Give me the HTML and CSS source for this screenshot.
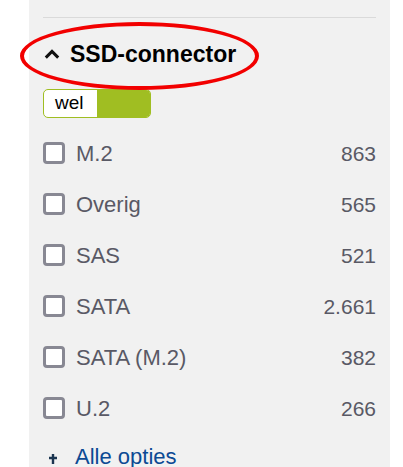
FILE: index.html
```html
<!DOCTYPE html>
<html lang="nl">
<head>
<meta charset="utf-8">
<link rel="stylesheet" href="styles.css">
</head>
<body>
<div class="panel">
  <div class="divider"></div>
  <h2 class="heading">
    <svg class="chevron" width="16" height="10" viewBox="0 0 16 10"><polyline points="1.8,8.6 8,2.4 14.2,8.6" fill="none" stroke="#111" stroke-width="3"/></svg>
    <span>SSD-connector</span>
  </h2>
  <div class="toggle"><span class="toggle-label">wel</span><span class="toggle-knob"></span></div>
  <ul class="options">
    <li class="option"><span class="box"></span><span class="label">M.2</span><span class="count">863</span></li>
    <li class="option"><span class="box"></span><span class="label">Overig</span><span class="count">565</span></li>
    <li class="option"><span class="box"></span><span class="label">SAS</span><span class="count">521</span></li>
    <li class="option"><span class="box"></span><span class="label">SATA</span><span class="count">2.661</span></li>
    <li class="option"><span class="box"></span><span class="label">SATA (M.2)</span><span class="count">382</span></li>
    <li class="option"><span class="box"></span><span class="label">U.2</span><span class="count">266</span></li>
  </ul>
  <a class="more" href="#">
    <svg class="plus" width="10" height="12" viewBox="0 0 10 12"><path d="M5 1v10M1 5h8" stroke="#1b3550" stroke-width="2.4"/></svg>
    <span>Alle opties</span>
  </a>
</div>
<div class="annotation"></div>
</body>
</html>
```

FILE: styles.css
```css
html, body {
  margin: 0;
  padding: 0;
  background: #fff;
}
body {
  position: relative;
  height: 467px;
  overflow: hidden;
  font-family: "Liberation Sans", Arial, sans-serif;
}
.panel {
  margin-left: 29px;
  width: 333px;
  height: 467px;
  padding: 17px 14px 0;
  background: #f1f1f1;
  box-sizing: content-box;
}
.divider {
  height: 1px;
  background: #dadada;
}
.heading {
  margin: 22px 0 0;
  height: 28px;
  display: flex;
  align-items: center;
  font-size: 23px;
  line-height: 28px;
  font-weight: bold;
  color: #000;
}
.chevron {
  margin-left: 1px;
  margin-right: 10px;
  margin-top: -1px;
}
.toggle {
  margin-top: 21px;
  width: 108px;
  height: 29px;
  box-sizing: border-box;
  border: 1px solid #a0be22;
  border-radius: 5px;
  display: flex;
  overflow: hidden;
  background: #fff;
}
.toggle-label {
  width: 53px;
  padding-left: 11px;
  box-sizing: border-box;
  font-size: 19px;
  line-height: 26px;
  color: #000;
}
.toggle-knob {
  flex: 1;
  background: #a0be22;
}
.options {
  list-style: none;
  margin: 10px 0 0;
  padding: 0;
}
.option {
  height: 51px;
  display: flex;
  align-items: center;
  color: #595965;
}
.box {
  width: 22px;
  height: 22px;
  box-sizing: border-box;
  border: 3px solid #888893;
  border-radius: 4px;
  background: #fff;
  margin-top: -1px;
}
.label {
  margin-left: 11px;
  font-size: 22px;
  line-height: 26px;
  flex: 1;
}
.count {
  font-size: 21px;
  line-height: 26px;
}
.more {
  margin-top: 10px;
  display: flex;
  align-items: center;
  text-decoration: none;
  color: #0c4a94;
  font-size: 22px;
  line-height: 26px;
}
.plus {
  margin-left: 5px;
  margin-right: 17px;
  margin-top: 4px;
}
.annotation {
  position: absolute;
  left: 20px;
  top: 22px;
  width: 239px;
  height: 68px;
  box-sizing: border-box;
  border: 4px solid #f20000;
  border-radius: 50%;
  pointer-events: none;
}
```
